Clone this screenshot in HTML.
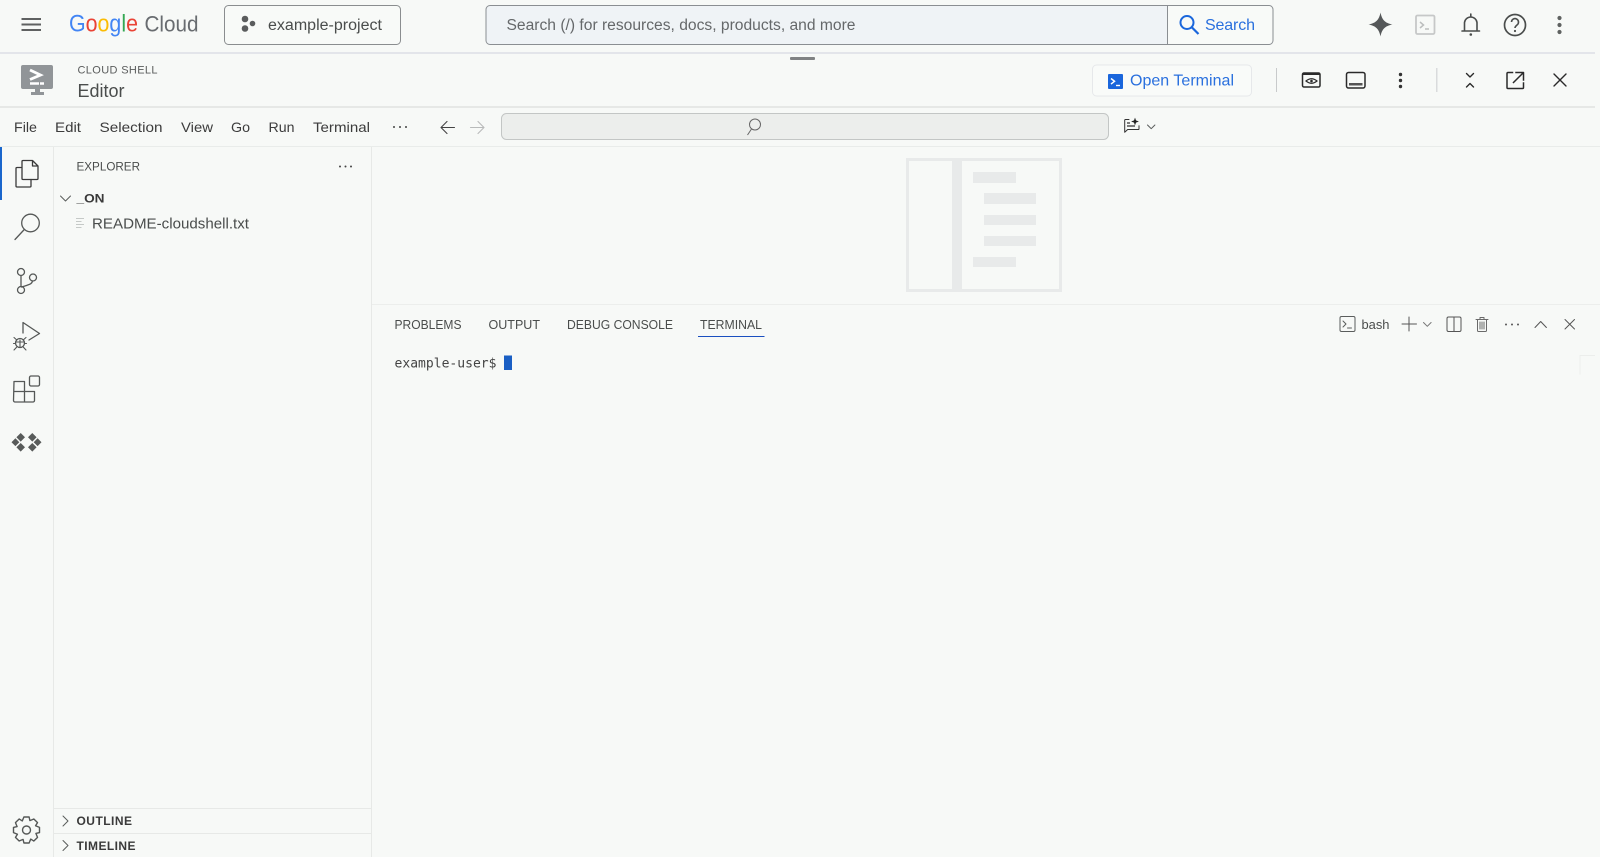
<!DOCTYPE html>
<html lang="en">
<head>
<meta charset="utf-8">
<title>Cloud Shell Editor</title>
<style>
html,body{margin:0;padding:0;width:1600px;height:857px;overflow:hidden;background:#f7f9f7}
svg{display:block;position:absolute;left:0;top:0}
text{font-family:"Liberation Sans",Arial,sans-serif;fill:#4a4d4c}
.m{font-family:"DejaVu Sans Mono","Liberation Mono",monospace}
.ic{fill:none;stroke:#4a4d4c;stroke-width:1.5;stroke-linecap:round;stroke-linejoin:round}
.a{fill:none;stroke:#555857;stroke-width:1.3;stroke-linecap:round;stroke-linejoin:round}
.t{fill:none;stroke:#5a5d5c;stroke-width:1;stroke-linecap:round;stroke-linejoin:round}
.d{fill:none;stroke:#2a2a2a;stroke-width:1.7;stroke-linecap:round;stroke-linejoin:round}
</style>
</head>
<body>
<svg width="1600" height="857" viewBox="0 0 1600 857" xmlns="http://www.w3.org/2000/svg">
<rect width="1600" height="857" fill="#f7f9f7"/>

<!-- top bar -->
<rect x="0" y="52" width="1595" height="2" fill="#e3e5ea"/>
<path d="M21.5 19h19.5M21.5 24.5h19.5M21.5 30h19.5" stroke="#5f6161" stroke-width="2" fill="none"/>
<text x="69" y="31.5" font-size="24" textLength="69" lengthAdjust="spacingAndGlyphs" style="fill:#4285f4"><tspan style="fill:#4285f4">G</tspan><tspan style="fill:#ea4335">o</tspan><tspan style="fill:#fbbc04">o</tspan><tspan style="fill:#4285f4">g</tspan><tspan style="fill:#34a853">l</tspan><tspan style="fill:#ea4335">e</tspan></text>
<text x="144.5" y="31.5" font-size="22.5" textLength="54" lengthAdjust="spacingAndGlyphs" style="fill:#686c70">Cloud</text>

<rect x="224.5" y="5.5" width="176" height="39" rx="4" fill="#f8faf8" stroke="#8a8d8f"/>
<circle cx="245" cy="19" r="3.3" fill="#5a5c5d"/><circle cx="252.5" cy="23.5" r="2.8" fill="#5a5c5d"/><circle cx="245" cy="28.500" r="3.3" fill="#5a5c5d"/>
<text x="268" y="30" font-size="15.5" textLength="114" lengthAdjust="spacingAndGlyphs">example-project</text>

<!-- search -->
<path d="M490 5.5H1167.5V44.5H490a4 4 0 0 1-4-4V9.5a4 4 0 0 1 4-4z" fill="#eff3f6" stroke="#8a8e92"/>
<path d="M1167.5 5.5H1269a4 4 0 0 1 4 4V40.5a4 4 0 0 1-4 4H1167.5z" fill="#f8faf8" stroke="#8a8e92"/>
<text x="506.5" y="30" font-size="15.5" textLength="349" lengthAdjust="spacingAndGlyphs" style="fill:#65686a">Search (/) for resources, docs, products, and more</text>
<circle cx="1187" cy="22.5" r="6.5" fill="none" stroke="#1a66dc" stroke-width="2"/>
<path d="M1192 27.5l6.5 6.5" stroke="#1a66dc" stroke-width="2.2" fill="none"/>
<text x="1205" y="30" font-size="16" textLength="50" lengthAdjust="spacing" style="fill:#2a70de">Search</text>

<!-- right top icons -->
<path d="M1380.5 12.5C1382 20 1385 23 1392.5 24.5 1385 26 1382 29 1380.5 36.5C1379 29 1376 26 1368.5 24.5 1376 23 1379 20 1380.5 12.5Z" fill="#555859"/>
<rect x="1416" y="15.5" width="18.5" height="18.5" rx="1.5" fill="none" stroke="#c6c8c8" stroke-width="1.8"/>
<path d="M1420 22l3.5 3-3.500 3" fill="none" stroke="#bcbebe" stroke-width="1.5"/><path d="M1425 29h4" stroke="#bcbebe" stroke-width="1.5"/>
<path d="M1462 31h17.500M1464.500 31v-8.500a6.300 6.300 0 0 1 12.500 0V31M1470.800 14v2.300" class="ic" style="stroke-width:1.6"/>
<circle cx="1470.800" cy="34.500" r="1.300" fill="#4a4d4c"/>
<circle cx="1515" cy="25" r="10.500" fill="none" stroke="#4a4d4c" stroke-width="1.7"/>
<path d="M1511.500 22a3.500 3.500 0 1 1 5.500 3c-1.300 1-2 1.500-2 3" fill="none" stroke="#4a4d4c" stroke-width="1.6"/>
<circle cx="1515" cy="31" r="1.100" fill="#4a4d4c"/>
<circle cx="1559.500" cy="18" r="2.100" fill="#5f6261"/><circle cx="1559.500" cy="25" r="2.100" fill="#5f6261"/><circle cx="1559.500" cy="32" r="2.100" fill="#5f6261"/>

<!-- drag handle -->
<rect x="790" y="57" width="25" height="3" rx="1" fill="#808283"/>

<!-- cloud shell header -->
<rect x="0" y="106" width="1595" height="2" fill="#e6e8e6"/>
<path d="M23 65h28a2 2 0 0 1 2 2v20a2 2 0 0 1-2 2H23a2 2 0 0 1-2-2V67a2 2 0 0 1 2-2z" fill="#919598"/>
<rect x="35" y="89" width="5" height="3" fill="#919598"/><rect x="31" y="92" width="13" height="3" fill="#919598"/>
<path d="M30 70l10.500 5L30 79.500" fill="none" stroke="#fff" stroke-width="2.800"/>
<path d="M30 83.500h9M40 83.500h4" stroke="#fff" stroke-width="2.600"/>
<text x="77.500" y="73.500" font-size="11" textLength="80" lengthAdjust="spacing" style="fill:#5a5c5c">CLOUD SHELL</text>
<text x="77.500" y="97" font-size="18" textLength="47" lengthAdjust="spacingAndGlyphs">Editor</text>

<rect x="1092.500" y="65" width="159" height="31" rx="4" fill="#f9fbf9" stroke="#e6e8ea"/>
<rect x="1108" y="74" width="15" height="15" rx="1" fill="#1a66dc"/>
<path d="M1111 78.500l3.500 2.800-3.500 2.800" fill="none" stroke="#fff" stroke-width="1.500"/><path d="M1116 85.500h4" stroke="#fff" stroke-width="1.400"/>
<text x="1130" y="85.500" font-size="16" textLength="104" lengthAdjust="spacing" style="fill:#2a70de">Open Terminal</text>
<rect x="1276" y="68" width="1" height="24" fill="#c8cacb"/>
<rect x="1436" y="68" width="1.500" height="24" fill="#d9dbdc"/>

<rect x="1302.500" y="73" width="17.500" height="14" rx="1.500" fill="none" stroke="#2a2a2a" stroke-width="1.500"/>
<rect x="1303" y="73" width="17" height="2" fill="#2a2a2a"/>
<path d="M1306 81q5.500-4.500 11 0q-5.500 4.500-11 0z" fill="none" stroke="#2a2a2a" stroke-width="1.200"/><circle cx="1311.500" cy="81" r="1.300" fill="#2a2a2a"/>
<rect x="1346.500" y="72.500" width="18.500" height="15.500" rx="2" fill="none" stroke="#2a2a2a" stroke-width="1.500"/>
<rect x="1349" y="83" width="13.500" height="2.500" fill="#555"/>
<circle cx="1400.500" cy="74.500" r="1.700" fill="#333"/><circle cx="1400.500" cy="80.500" r="1.700" fill="#333"/><circle cx="1400.500" cy="86.500" r="1.700" fill="#333"/>
<path d="M1466.500 73.500l3.500 3.500 3.500-3.500M1466.500 87l3.500-3.500 3.500 3.500" class="d" style="stroke-width:1.400"/>
<path d="M1512.500 72.500h-4.500a1 1 0 0 0-1 1V87.500a1 1 0 0 0 1 1h14.500a1 1 0 0 0 1-1v-4.500M1516 72.500h7.500V80M1523 73l-9.500 9.500" class="d" style="stroke-width:1.500;stroke-linecap:square"/>
<path d="M1554 74l12 12M1566 74l-12 12" class="d" style="stroke-width:1.400"/>

<!-- menu bar -->
<g font-size="14">
<text x="14" y="132" textLength="23" lengthAdjust="spacingAndGlyphs" style="fill:#3c3c3c">File</text>
<text x="55" y="132" textLength="26" lengthAdjust="spacingAndGlyphs" style="fill:#3c3c3c">Edit</text>
<text x="99.500" y="132" textLength="63" lengthAdjust="spacingAndGlyphs" style="fill:#3c3c3c">Selection</text>
<text x="181" y="132" textLength="32" lengthAdjust="spacingAndGlyphs" style="fill:#3c3c3c">View</text>
<text x="231" y="132" textLength="19" lengthAdjust="spacingAndGlyphs" style="fill:#3c3c3c">Go</text>
<text x="268.500" y="132" textLength="26" lengthAdjust="spacingAndGlyphs" style="fill:#3c3c3c">Run</text>
<text x="313" y="132" textLength="57" lengthAdjust="spacingAndGlyphs" style="fill:#3c3c3c">Terminal</text>
</g>
<circle cx="394" cy="127" r="1" fill="#444"/><circle cx="400" cy="127" r="1" fill="#444"/><circle cx="406" cy="127" r="1" fill="#444"/>
<path d="M454.500 127.500h-13M447 121.500l-6 6 6 6" class="t" style="stroke:#444;stroke-width:1.100"/>
<path d="M470.500 127.500h13M478 121.500l6 6-6 6" class="t" style="stroke:#b8baba;stroke-width:1.100"/>
<rect x="501.500" y="113.500" width="607" height="26" rx="5" fill="#eceeec" stroke="#c3c6c5"/>
<circle cx="755" cy="124.500" r="5.500" fill="none" stroke="#666" stroke-width="1"/>
<path d="M751.500 129l-4 6" stroke="#666" stroke-width="1" fill="none"/>
<path d="M1129 119.500h-3.500a.8 .8 0 0 0-.8 .8v12l3-2.800h10.500a.8 .8 0 0 0 .8-.8v-3" class="t" style="stroke:#333"/>
<path d="M1127 123h3M1127 126h8" stroke="#333" stroke-width="1.200"/>
<path d="M1135 118.500l.8 2.200 2.200 .8-2.200 .8-.8 2.200-.8-2.200-2.200-.8 2.200-.8z" fill="#222" stroke="#222" stroke-width=".6"/>
<path d="M1147.500 125l3.700 3.700 3.700-3.700" class="t"/>
<rect x="0" y="146" width="1600" height="1" fill="#e9ecea"/>

<!-- activity bar -->
<rect x="0" y="147" width="2" height="53" fill="#1a66cc"/>
<rect x="53" y="147" width="1" height="710" fill="#e7e9e7"/>
<path d="M22 177.500V161.500a1 1 0 0 1 1-1h9.500l5.500 5.500v12.500a1 1 0 0 1-1 1H23a1 1 0 0 1-1-1zM32.500 160.500v5.500h5.500" class="a" style="stroke:#3a3a3a"/>
<path d="M21 167.500h-4a1 1 0 0 0-1 1v17.500a1 1 0 0 0 1 1h13a1 1 0 0 0 1-1v-6.500" class="a" style="stroke:#3a3a3a"/>

<circle cx="30.500" cy="223" r="8.800" class="a"/>
<path d="M24.300 229.500l-9.300 10" class="a"/>

<circle cx="21" cy="272" r="3.500" class="a"/><circle cx="21" cy="290" r="3.500" class="a"/><circle cx="33" cy="277.500" r="3.500" class="a"/>
<path d="M21 275.500v11M32.500 281c-.5 3-3.500 3.500-6 4.500-2 .6-3.500 1-5 1.500" class="a"/>

<path d="M23 323v10M23 322.500l16.500 11-10.500 6.500" class="a"/>
<circle cx="20" cy="343" r="4.500" class="a"/>
<path d="M14 337.500l2.800 2.500M26 337.500l-2.800 2.500M13.500 343.500h2M24.500 343.500h2M14 350l2.800-3M26 350l-2.800-3M15.500 342h9M20 340v7.500" class="a" style="stroke-width:1.100"/>

<path d="M14 381.500h10.500V402H15a1.500 1.500 0 0 1-1.500-1.500zM14 391.500h20.500V400.500a1.500 1.500 0 0 1-1.500 1.500H24.500V391.500" class="a"/>
<rect x="29.500" y="376" width="10" height="10" rx="1.500" class="a"/>

<g fill="#585b5a">
<path d="M20.700 433l4.300 4.300-4.300 4.300-4.300-4.300zM15.400 438.300l3.900 3.900-3.900 3.900-3.900-3.900zM20.700 443l4.300 4.300-4.300 4.300-4.300-4.300zM32.300 433l4.300 4.300-4.300 4.300-4.300-4.300zM37.600 438.300l3.900 3.900-3.900 3.900-3.900-3.900zM32.300 443l4.300 4.300-4.300 4.300-4.300-4.300z"/>
</g>

<g transform="translate(26.500 830)">
<circle r="4" class="a" style="stroke-width:1.400"/>
<polygon points="-2.6,-13 2.6,-13 3.4,-9.4 7.35,-11.03 11.03,-7.35 9.05,-4.24 13,-2.6 13,2.6 9.4,3.4 11.03,7.35 7.35,11.03 4.24,9.05 2.6,13 -2.6,13 -3.4,9.4 -7.35,11.03 -11.03,7.35 -9.05,4.24 -13,2.6 -13,-2.6 -9.4,-3.4 -11.03,-7.35 -7.35,-11.03 -4.24,-9.05" class="a" style="stroke-width:1.400"/>
</g>

<!-- sidebar -->
<rect x="371" y="147" width="1" height="710" fill="#e7e9e7"/>
<text x="76.500" y="170.500" font-size="12" textLength="63.500" lengthAdjust="spacingAndGlyphs">EXPLORER</text>
<circle cx="340" cy="166.500" r="1" fill="#444"/><circle cx="345.500" cy="166.500" r="1" fill="#444"/><circle cx="351" cy="166.500" r="1" fill="#444"/>
<path d="M60.500 196l5 5 5-5" class="t"/>
<text x="76.500" y="202.500" font-size="12" font-weight="bold" textLength="28" lengthAdjust="spacingAndGlyphs" style="fill:#3a3a3a">_ON</text>
<path d="M76 218.500h8M76 221.500h5.500M76 224.500h8M76 227.500h5.500" stroke="#c5c9c7" stroke-width="1.100" fill="none"/>
<text x="92" y="228.500" font-size="14.500" textLength="157" lengthAdjust="spacingAndGlyphs">README-cloudshell.txt</text>

<rect x="54" y="808" width="317" height="1" fill="#e7e9e7"/>
<rect x="54" y="833" width="317" height="1" fill="#e7e9e7"/>
<path d="M63 816l5 5-5 5" class="t"/>
<path d="M63 840.500l5 5-5 5" class="t"/>
<text x="76.500" y="825" font-size="12" font-weight="bold" textLength="55.500" lengthAdjust="spacing" style="fill:#3a3a3a">OUTLINE</text>
<text x="76.500" y="850" font-size="12" font-weight="bold" textLength="59" lengthAdjust="spacing" style="fill:#3a3a3a">TIMELINE</text>

<!-- watermark illustration -->
<g fill="#e8eaea">
<path fill-rule="evenodd" d="M906 158h156v134H906zM909 161v128h43V161zM962 161v128h97V161z"/>
<rect x="973" y="172" width="43" height="11"/>
<rect x="984" y="193" width="52" height="11"/>
<rect x="984" y="215" width="52" height="10"/>
<rect x="984" y="236" width="52" height="10"/>
<rect x="973" y="257" width="43" height="10"/>
</g>

<!-- panel -->
<rect x="372" y="304" width="1228" height="1" fill="#eceeec"/>
<g font-size="12.5">
<text x="394.500" y="329" textLength="67" lengthAdjust="spacingAndGlyphs">PROBLEMS</text>
<text x="488.500" y="329" textLength="51.500" lengthAdjust="spacingAndGlyphs">OUTPUT</text>
<text x="567" y="329" textLength="106" lengthAdjust="spacingAndGlyphs">DEBUG CONSOLE</text>
<text x="700" y="329" textLength="62" lengthAdjust="spacingAndGlyphs">TERMINAL</text>
</g>
<rect x="698" y="336" width="66.500" height="1" fill="#1a4fc0"/>
<text class="m" x="394.500" y="367.500" font-size="13" textLength="102" lengthAdjust="spacingAndGlyphs" style="fill:#444">example-user$</text>
<rect x="504" y="355.500" width="8" height="14.500" fill="#1a5fc4"/>

<rect x="1340" y="316.500" width="15" height="15" rx="1.500" class="t"/>
<path d="M1343 321l3 3-3 3M1347.500 328h4" class="t"/>
<text x="1361.500" y="329" font-size="13" textLength="28" lengthAdjust="spacingAndGlyphs">bash</text>
<path d="M1402 324h14.500M1409 317v14" class="t" style="stroke:#555"/>
<path d="M1423.500 322.500l3.800 3.800 3.800-3.800" class="t" style="stroke:#777"/>
<rect x="1447" y="317" width="14" height="14.500" rx="1.500" class="t" style="stroke:#555"/>
<path d="M1454 317v14.500" class="t" style="stroke:#555"/>
<path d="M1476 319.500h12M1480 319.500v-2h4v2M1477.500 319.500v11a1 1 0 0 0 1 1h7a1 1 0 0 0 1-1v-11M1480 322v7M1482 322v7M1484 322v7" class="t" style="stroke:#6a6a6a"/>
<circle cx="1506" cy="324.500" r="1" fill="#555"/><circle cx="1512" cy="324.500" r="1" fill="#555"/><circle cx="1518" cy="324.500" r="1" fill="#555"/>
<path d="M1535 327.500l5.700-6 5.700 6" class="t" style="stroke:#555"/>
<path d="M1565 319.500l9.500 9.500M1574.500 319.500l-9.500 9.500" class="t" style="stroke:#555"/>
<path d="M1595 355.500h-15v19" fill="none" stroke="#eceeec" stroke-width="1"/>
</svg>
</body>
</html>
